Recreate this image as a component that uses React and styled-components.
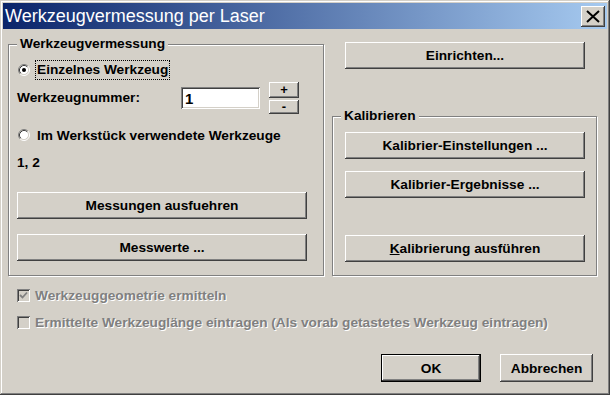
import React from 'react'
import styled, { createGlobalStyle, css } from 'styled-components'

const FACE = '#d4d0c8'

const GlobalStyle = createGlobalStyle`
  html, body { margin: 0; padding: 0; background: ${FACE}; }
  body { font-family: 'Liberation Sans', Arial, sans-serif; }
  * { box-sizing: border-box; }
`

const raised = css`
  box-shadow: inset -1px -1px #404040, inset 1px 1px #fff,
    inset -2px -2px #808080, inset 2px 2px ${FACE};
`

const sunken = css`
  box-shadow: inset 1px 1px #808080, inset -1px -1px #fff,
    inset 2px 2px #404040, inset -2px -2px ${FACE};
`

const Window = styled.div`
  width: 610px;
  height: 395px;
  padding: 3px;
  display: flex;
  flex-direction: column;
  background: ${FACE};
  box-shadow: inset -1px -1px #404040, inset 1px 1px ${FACE},
    inset -2px -2px #808080, inset 2px 2px #fff;
`

const TitleBar = styled.div`
  height: 26px;
  display: flex;
  align-items: center;
  justify-content: space-between;
  padding: 0 2px 0 2px;
  background: linear-gradient(to right, #0a246a, #a6caf0);
`

const Title = styled.span`
  color: #fff;
  font-size: 18px;
  line-height: 26px;
  white-space: nowrap;
`

const CloseButton = styled.div`
  width: 24px;
  height: 21px;
  display: flex;
  align-items: center;
  justify-content: center;
  background: ${FACE};
  ${raised}
`

const Body = styled.div`
  flex: 1;
  display: flex;
  flex-direction: column;
  padding: 13px 10px 10px 5px;
  font-size: 13.7px;
  font-weight: bold;
  color: #000;
`

const TopRow = styled.div`
  display: grid;
  grid-template-columns: 316px 265px;
  column-gap: 8px;
`

const Group = styled.div`
  position: relative;
  display: flex;
  flex-direction: column;
  border: 1px solid #808080;
  box-shadow: inset 1px 1px #fff, 1px 1px #fff;
  margin-top: ${p => p.$top || 0}px;
  padding: ${p => p.$pad};
  flex: ${p => (p.$grow ? 1 : 'none')};
`

const GroupLabel = styled.span`
  position: absolute;
  top: -9px;
  left: 8px;
  padding: 0 3px;
  background: ${FACE};
  line-height: 16px;
  white-space: nowrap;
`

const Column = styled.div`
  display: flex;
  flex-direction: column;
`

const Button = styled.button`
  display: block;
  width: ${p => (p.$w ? `${p.$w}px` : 'auto')};
  height: ${p => p.$h || 27}px;
  margin: ${p => p.$m || 0};
  padding: 0;
  border: none;
  background: ${FACE};
  font: inherit;
  color: #000;
  white-space: nowrap;
  ${raised}
`

const DefaultButton = styled(Button)`
  border: 1px solid #000;
`

const Underline = styled.span`
  text-decoration: underline;
`

const Row = styled.div`
  display: flex;
  align-items: center;
  height: ${p => p.$h}px;
  margin-top: ${p => p.$top || 0}px;
`

const FocusLabel = styled.span`
  margin-left: 5px;
  padding: 1px 2px 2px;
  outline: 1px dotted #000;
  outline-offset: -1px;
  line-height: 17px;
`

const RadioLabel = styled.span`
  margin-left: 7px;
`

const RadioBox = styled.svg`
  margin-left: 1px;
  flex: none;
`

const FieldLabel = styled.span`
  width: 164px;
`

const Input = styled.div`
  width: 79px;
  height: 22px;
  padding: 3px 4px;
  background: #fff;
  font-size: 15px;
  line-height: 17px;
  ${sunken}
`

const Stepper = styled.div`
  display: flex;
  flex-direction: column;
  gap: 2px;
  margin-left: 9px;
`

const StepButton = styled(Button)`
  width: 30px;
  font-size: 13px;
  line-height: 1;
`

const Plain = styled.div`
  line-height: 16px;
  margin-top: ${p => p.$top || 0}px;
`

const CheckRow = styled.div`
  display: flex;
  align-items: center;
  height: 13px;
  margin: ${p => p.$top}px 0 0 9px;
  color: #808080;
  text-shadow: 1px 1px #fff;
  white-space: nowrap;
`

const CheckBox = styled.div`
  width: 13px;
  height: 13px;
  margin-right: 5px;
  flex: none;
  display: flex;
  align-items: center;
  justify-content: center;
  background: ${FACE};
  ${sunken}
`

const Footer = styled.div`
  display: flex;
  justify-content: flex-end;
  gap: 19px;
  margin: 25px 4px 0 0;
`

function Radio({ checked }) {
  return (
    <RadioBox width="12" height="12" viewBox="0 0 12 12">
      <circle cx="6" cy="6" r="4.5" fill="#fff" />
      <path d="M2.11 9.89 A5.5 5.5 0 0 1 9.89 2.11" fill="none" stroke="#808080" />
      <path d="M9.89 2.11 A5.5 5.5 0 0 1 2.11 9.89" fill="none" stroke="#fff" />
      <path d="M2.82 9.18 A4.5 4.5 0 0 1 9.18 2.82" fill="none" stroke="#404040" />
      <path d="M9.18 2.82 A4.5 4.5 0 0 1 2.82 9.18" fill="none" stroke={FACE} />
      {checked && <circle cx="6" cy="6" r="2" fill="#000" />}
    </RadioBox>
  )
}

function Check({ checked }) {
  return (
    <CheckBox>
      {checked && (
        <svg width="9" height="9" viewBox="0 0 9 9">
          <polyline points="1,4 3.5,6.5 8,1.5" fill="none" stroke="#808080" strokeWidth="1.8" />
        </svg>
      )}
    </CheckBox>
  )
}

export default function App() {
  return (
    <>
      <GlobalStyle />
      <Window>
        <TitleBar>
          <Title>Werkzeugvermessung per Laser</Title>
          <CloseButton>
            <svg width="14" height="13" viewBox="0 0 14 13">
              <path d="M1 1 L13 12 M13 1 L1 12" stroke="#000" strokeWidth="2" />
            </svg>
          </CloseButton>
        </TitleBar>
        <Body>
          <TopRow>
            <Group $top={2} $pad="14px 16px 13px 8px">
              <GroupLabel>Werkzeugvermessung</GroupLabel>
              <Row $h={21}>
                <Radio checked />
                <FocusLabel>Einzelnes Werkzeug</FocusLabel>
              </Row>
              <Row $h={31} $top={2}>
                <FieldLabel>Werkzeugnummer:</FieldLabel>
                <Input>1</Input>
                <Stepper>
                  <StepButton $h={16}>+</StepButton>
                  <StepButton $h={14}>-</StepButton>
                </Stepper>
              </Row>
              <Row $h={20} $top={12}>
                <Radio />
                <RadioLabel>Im Werkstück verwendete Werkzeuge</RadioLabel>
              </Row>
              <Plain $top={10}>1, 2</Plain>
              <Button $m="21px 0 0">Messungen ausfuehren</Button>
              <Button $m="15px 0 0">Messwerte ...</Button>
            </Group>
            <Column>
              <Button $m="0 12px 0 13px">Einrichten...</Button>
              <Group $top={47} $grow $pad="15px 11px 13px 12px">
                <GroupLabel>Kalibrieren</GroupLabel>
                <Button>Kalibrier-Einstellungen ...</Button>
                <Button $m="12px 0 0">Kalibrier-Ergebnisse ...</Button>
                <Button $m="37px 0 0">
                  <Underline>K</Underline>alibrierung ausführen
                </Button>
              </Group>
            </Column>
          </TopRow>
          <CheckRow $top={13}>
            <Check checked />
            Werkzeuggeometrie ermitteln
          </CheckRow>
          <CheckRow $top={14}>
            <Check />
            Ermittelte Werkzeuglänge eintragen (Als vorab getastetes Werkzeug eintragen)
          </CheckRow>
          <Footer>
            <DefaultButton $w={100} $h={28}>OK</DefaultButton>
            <Button $w={93} $h={28}>Abbrechen</Button>
          </Footer>
        </Body>
      </Window>
    </>
  )
}
